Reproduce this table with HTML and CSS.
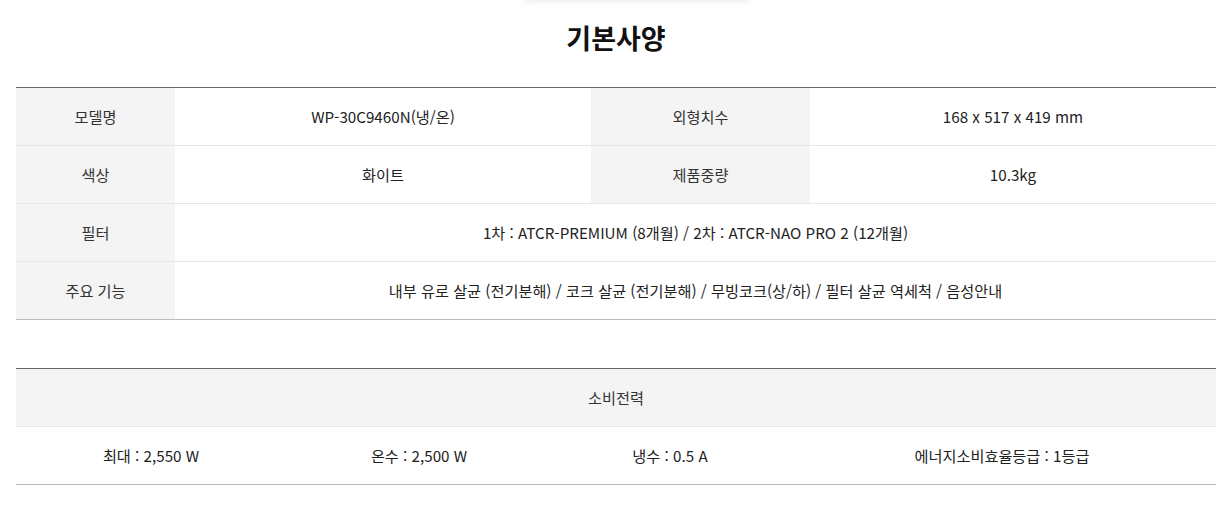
FILE: index.html
```html
<!DOCTYPE html>
<html lang="ko">
<head>
<meta charset="utf-8">
<link rel="stylesheet" href="styles.css">
</head>
<body>
<div class="tabshadow"></div>
<section class="spec">
  <h2 class="title">기본사양</h2>
  <div class="grid basic">
    <div class="th">모델명</div>
    <div class="td">WP-30C9460N(냉/온)</div>
    <div class="th">외형치수</div>
    <div class="td">168 x 517 x 419 mm</div>

    <div class="th">색상</div>
    <div class="td">화이트</div>
    <div class="th">제품중량</div>
    <div class="td">10.3kg</div>

    <div class="th">필터</div>
    <div class="td span3">1차 : ATCR-PREMIUM (8개월) / 2차 : ATCR-NAO PRO 2 (12개월)</div>

    <div class="th last">주요 기능</div>
    <div class="td span3 last">내부 유로 살균 (전기분해) / 코크 살균 (전기분해) / 무빙코크(상/하) / 필터 살균 역세척 / 음성안내</div>
  </div>

  <div class="grid power">
    <div class="th span4">소비전력</div>
    <div class="td last">최대 : 2,550 W</div>
    <div class="td last">온수 : 2,500 W</div>
    <div class="td last">냉수 : 0.5 A</div>
    <div class="td last">에너지소비효율등급 : 1등급</div>
  </div>
</section>
</body>
</html>
```

FILE: styles.css
```css
* { box-sizing: border-box; }
html, body { margin: 0; padding: 0; background: #fff; }
body {
  font-family: "Noto Sans CJK KR", "Noto Sans", sans-serif;
  color: #222;
  overflow: hidden;
}
.tabshadow {
  position: absolute;
  left: 525px;
  top: -20px;
  width: 225px;
  height: 20px;
  box-shadow: 0 0 8px rgba(0,0,0,0.12);
}
.spec {
  padding: 0 4px 0 16px;
}
.title {
  margin: 0;
  padding-top: 18px;
  height: 87px;
  text-align: center;
  font-size: 27px;
  font-weight: 700;
  line-height: 40px;
  color: #111;
}
.grid {
  display: grid;
  border-top: 1px solid #666;
  border-bottom: 1px solid #bbb;
}
.basic {
  grid-template-columns: 159px 416px 219px 1fr;
}
.power {
  margin-top: 48px;
  grid-template-columns: 270px 266px 236px 1fr;
}
.th, .td {
  height: 58px;
  padding-bottom: 2px;
  display: flex;
  align-items: center;
  justify-content: center;
  font-size: 15.2px;
  border-bottom: 1px solid #e6e6e6;
}
.th { background: #f4f4f4; color: #333; }
.td { background: #fff; color: #222; }
.last { border-bottom: 0; height: 57px; padding-bottom: 1px; }
.span3 { grid-column: span 3; }
.span4 { grid-column: span 4; }
```
